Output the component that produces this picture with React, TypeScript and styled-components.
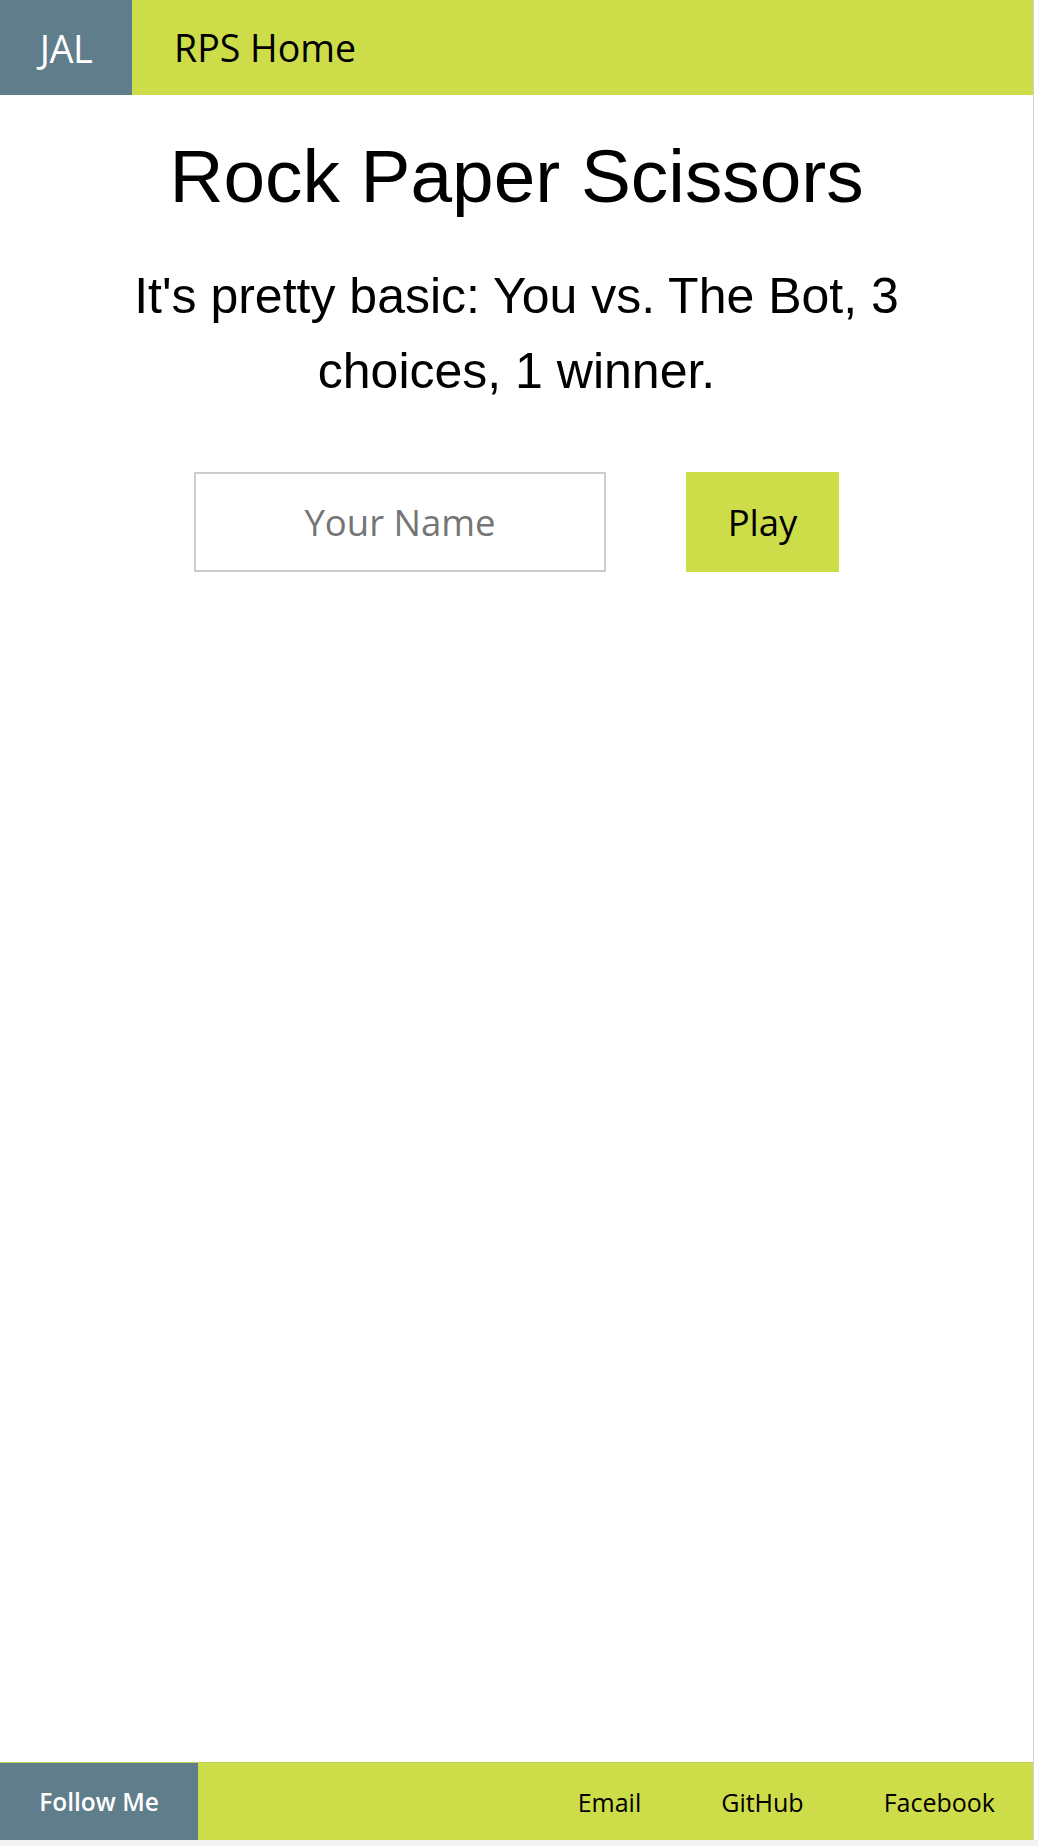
import React from "react";
import styled, { createGlobalStyle } from "styled-components";

const GREEN = "#cddc49";
const SLATE = "#607d8b";

const Global = createGlobalStyle`
  html, body { margin: 0; padding: 0; background: #ffffff; }
  * { box-sizing: border-box; }
`;

const Shell = styled.div`
  display: flex;
  flex-direction: column;
  width: 1038px;
  height: 1846px;
`;

const Frame = styled.div`
  display: flex;
  flex: 1;
`;

const Page = styled.div`
  display: flex;
  flex-direction: column;
  width: 1034px;
  margin-right: 1px;
  border-right: 1px solid #d2d2d2;
  background: #ffffff;
`;

const BottomStrip = styled.div`
  height: 6px;
  background: #f2f2f2;
`;

const Header = styled.header`
  display: flex;
  align-items: stretch;
  height: 95px;
  background: ${GREEN};
  font-family: "Open Sans", sans-serif;
`;

const Brand = styled.div`
  display: flex;
  align-items: center;
  justify-content: center;
  width: 132px;
  background: ${SLATE};
  color: #ffffff;
  font-size: 38px;
  letter-spacing: -0.5px;
`;

const NavLink = styled.a`
  display: flex;
  align-items: center;
  padding: 0 42px;
  color: #000000;
  font-size: 37.5px;
  text-decoration: none;
`;

const Main = styled.main`
  flex: 1;
  display: flex;
  flex-direction: column;
  align-items: center;
`;

const Title = styled.h1`
  margin: 38px 0 0;
  font-family: "Liberation Sans", Arial, sans-serif;
  font-weight: 400;
  font-size: 74.8px;
  line-height: 86px;
  color: #000000;
  text-align: center;
`;

const Lead = styled.p`
  max-width: 800px;
  margin: 40px 0 0;
  font-family: "Liberation Sans", Arial, sans-serif;
  font-size: 50px;
  line-height: 75px;
  color: #000000;
  text-align: center;
`;

const PlayForm = styled.form`
  display: flex;
  gap: 80px;
  margin-top: 63px;
`;

const NameInput = styled.input`
  width: 412px;
  height: 100px;
  border: 2px solid #cccccc;
  background: #ffffff;
  font-family: "Open Sans", sans-serif;
  font-size: 36.5px;
  text-align: center;
  color: #000;
  outline: none;
  &::placeholder { color: #757575; }
`;

const PlayButton = styled.button`
  width: 153px;
  height: 100px;
  border: none;
  background: ${GREEN};
  color: #000000;
  font-family: "Open Sans", sans-serif;
  font-size: 36.5px;
  padding: 0;
  cursor: pointer;
`;

const Footer = styled.footer`
  display: flex;
  align-items: stretch;
  height: 78px;
  background: ${GREEN};
  border-top: 1px solid #bfcf5a;
  font-family: "Open Sans", sans-serif;
`;

const FollowTag = styled.div`
  display: flex;
  align-items: center;
  justify-content: center;
  width: 198px;
  background: ${SLATE};
  color: #ffffff;
  font-size: 24.5px;
  font-weight: 600;
`;

const Links = styled.nav`
  flex: 1;
  display: flex;
  justify-content: flex-end;
`;

const FootLink = styled.a`
  display: flex;
  align-items: center;
  padding: 0 38px 0 42px;
  color: #000000;
  font-size: 25px;
  text-decoration: none;
`;

export default function App() {
  return (
    <>
      <Global />
      <Shell>
        <Frame>
          <Page>
            <Header>
              <Brand>JAL</Brand>
              <NavLink href="#">RPS Home</NavLink>
            </Header>
            <Main>
              <Title>Rock Paper Scissors</Title>
              <Lead>It's pretty basic: You vs. The Bot, 3 choices, 1 winner.</Lead>
              <PlayForm onSubmit={(e) => e.preventDefault()}>
                <NameInput placeholder="Your Name" />
                <PlayButton type="submit">Play</PlayButton>
              </PlayForm>
            </Main>
            <Footer>
              <FollowTag>Follow Me</FollowTag>
              <Links>
                <FootLink href="#">Email</FootLink>
                <FootLink href="#">GitHub</FootLink>
                <FootLink href="#">Facebook</FootLink>
              </Links>
            </Footer>
          </Page>
        </Frame>
        <BottomStrip />
      </Shell>
    </>
  );
}
